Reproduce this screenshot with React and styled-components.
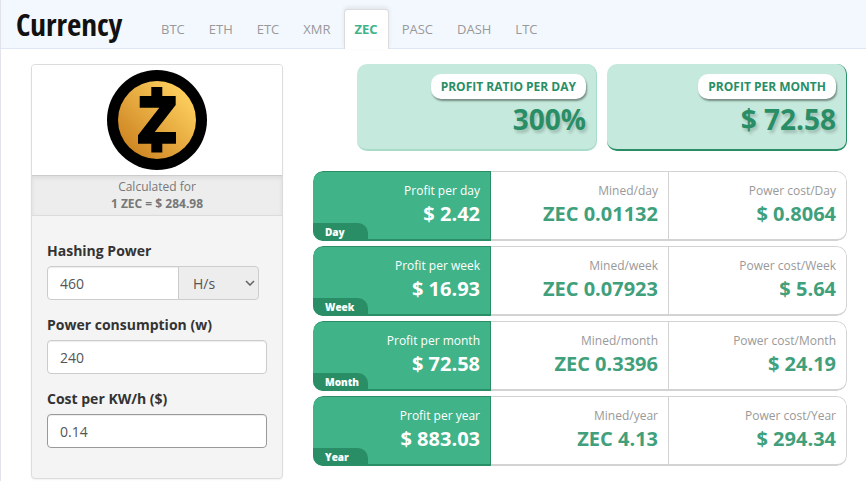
import React, { useState } from "react";
import styled, { createGlobalStyle } from "styled-components";

const GlobalStyle = createGlobalStyle`
    * {
        box-sizing: border-box;
    }
    body {
        margin: 0;
        background-color: #fff;
        font-family: "Open Sans", "Noto Sans", sans-serif;
        font-size: 14px;
        color: #333;
    }
`
const Page = styled.div`
    min-height: 100vh;
    border-left: 1px solid #e3e3ee;
`
const Header = styled.header`
    height: 49px;
    padding-left: 15px;
    background-color: #f3f8ff;
    border-bottom: 1px solid #dfe7f7;
    display: flex;
    align-items: flex-start;
`
const Title = styled.h1`
    width: 134px;
    margin: 0;
    font-family: "Open Sans Condensed", "Noto Sans Condensed", "Liberation Sans Narrow", "Open Sans", sans-serif;
    font-size: 31px;
    line-height: 48px;
    font-weight: 700;
    color: #111;
`
const Tabs = styled.nav`
    display: flex;
    gap: 2px;
    padding-top: 9px;
`
const Tab = styled.a`
    height: 40px;
    padding: 0 10px;
    border: 1px solid ${({ $active }) => ($active ? "#dcdcdc" : "transparent")};
    border-bottom: none;
    border-radius: 4px 4px 0 0;
    background-color: ${({ $active }) => ($active ? "#fff" : "transparent")};
    box-shadow: ${({ $active }) => ($active ? "0 -2px 4px rgba(0, 0, 0, 0.08)" : "none")};
    font-size: 13px;
    line-height: 38px;
    font-weight: ${({ $active }) => ($active ? 700 : 400)};
    color: ${({ $active }) => ($active ? "#41b389" : "#999")};
    text-decoration: none;
`
const Content = styled.main`
    display: flex;
    align-items: flex-start;
    gap: 30px;
    padding: 15px 19px 2px 30px;
`
const Card = styled.section`
    flex: 0 0 252px;
    border: 1px solid #dcdcdc;
    border-radius: 4px;
    background-color: #f4f4f4;
    box-shadow: 0 1px 2px rgba(0, 0, 0, 0.06);
    overflow: hidden;
`
const LogoBox = styled.div`
    height: 110px;
    display: flex;
    justify-content: center;
    align-items: center;
    background-color: #fff;
`
const Rate = styled.div`
    padding: 2px 0 3px;
    border-top: 1px solid #ccc;
    border-bottom: 1px solid #dcdcdc;
    background-color: #ededed;
    box-shadow: inset 0 2px 4px rgba(0, 0, 0, 0.08);
    font-size: 12px;
    line-height: 17px;
    color: #777;
    text-align: center;
`
const Form = styled.form`
    padding: 24px 15px 30px;
    display: flex;
    flex-direction: column;
    gap: 14px;
`
const Field = styled.div`
    display: flex;
    flex-direction: column;
    gap: 5px;
`
const Label = styled.label`
    font-size: 14px;
    line-height: 21px;
    font-weight: 700;
    color: #333;
`
const InputGroup = styled.div`
    display: flex;
    padding-right: 8px;
`
const Input = styled.input`
    width: 100%;
    min-width: 0;
    flex: 1;
    height: 34px;
    min-height: 34px;
    padding: 0 12px;
    border: 1px solid ${({ $dark }) => ($dark ? "#999" : "#ccc")};
    border-radius: ${({ $joined }) => ($joined ? "4px 0 0 4px" : "4px")};
    box-shadow: inset 0 1px 1px rgba(0, 0, 0, 0.075);
    background-color: #fff;
    font-family: inherit;
    font-size: 14px;
    color: #555;
    outline: none;
`
const SelectBox = styled.div`
    position: relative;
    width: 81px;
    margin-left: -1px;
`
const Select = styled.select`
    width: 100%;
    height: 34px;
    padding: 0 14px;
    border: 1px solid #ccc;
    border-radius: 0 4px 4px 0;
    background-color: #ededed;
    appearance: none;
    font-family: inherit;
    font-size: 14px;
    color: #555;
    outline: none;
`
const Arrow = styled.svg`
    position: absolute;
    top: 14px;
    right: 4px;
    width: 10px;
    height: 6px;
    pointer-events: none;
`
const Results = styled.section`
    flex: 1;
    min-width: 0;
`
const Highlights = styled.div`
    display: flex;
    justify-content: flex-end;
    gap: 10px;
    margin-bottom: 20px;
`
const Highlight = styled.div`
    flex: 0 1 240px;
    height: 87px;
    padding: 10px 10px 0 0;
    border: solid ${({ $strong }) => ($strong ? "#298e66" : "#a9dcc8")};
    border-width: 0 1px 2px 0;
    border-radius: 10px;
    background-color: #c5e9dc;
    display: flex;
    flex-direction: column;
    align-items: flex-end;
`
const Badge = styled.div`
    padding: 0 10px;
    border-radius: 10px;
    background-color: #fff;
    box-shadow: 1px 2px 2px rgba(0, 0, 0, 0.4);
    font-size: 12px;
    line-height: 25px;
    font-weight: 700;
    color: #298e66;
    white-space: nowrap;
`
const HighlightValue = styled.div`
    font-size: 28px;
    line-height: 40px;
    font-weight: 700;
    color: #298e66;
    text-shadow: 2px 3px 3px rgba(0, 0, 0, 0.18);
`
const Rows = styled.div`
    display: flex;
    flex-direction: column;
    gap: 5px;
`
const Row = styled.div`
    position: relative;
    height: 70px;
    display: grid;
    grid-template-columns: repeat(3, 1fr);
    border-radius: 10px;
    overflow: hidden;
`
const Cell = styled.div`
    padding: 11px 10px 0 0;
    border: solid ${({ $filled }) => ($filled ? "#298e66" : "#d3d3d3")};
    border-width: 1px 1px 2px 0;
    background-color: ${({ $filled }) => ($filled ? "#41b389" : "#fff")};
    color: ${({ $filled }) => ($filled ? "#fff" : "#999")};
    text-align: right;
    white-space: nowrap;
    &:first-child {
        border-radius: 10px 0 0 10px;
    }
    &:last-child {
        border-radius: 0 10px 10px 0;
    }
`
const CellLabel = styled.div`
    font-size: 12px;
    line-height: 16px;
`
const CellValue = styled.div`
    font-size: 20px;
    line-height: 30px;
    font-weight: 700;
    color: ${({ $filled }) => ($filled ? "#fff" : "#41a07c")};
`
const Period = styled.div`
    position: absolute;
    left: 0;
    bottom: 0;
    width: 55px;
    height: 18px;
    padding-left: 12px;
    border-top-right-radius: 10px;
    background-color: #298e66;
    font-size: 10px;
    line-height: 18px;
    font-weight: 800;
    color: #fff;
    text-align: left;
`

const ZcashLogo = () => (
    <svg width="100" height="100" viewBox="0 0 100 100" role="img" aria-label="Zcash">
        <defs>
            <linearGradient id="gold" x1="0.15" y1="0.85" x2="0.85" y2="0.15">
                <stop offset="0" stopColor="#cf8724" />
                <stop offset="1" stopColor="#fdce5c" />
            </linearGradient>
        </defs>
        <circle cx="50" cy="50" r="50" />
        <circle cx="50" cy="50" r="39" fill="url(#gold)" />
        <path d="M44.3 17h11v9h13.4v9L47.7 62H69v11.7H55.3v8.8h-11v-8.8H31v-8.4l21.3-27.6H32.7V26h11.6z" />
    </svg>
)

const coins = ["BTC", "ETH", "ETC", "XMR", "ZEC", "PASC", "DASH", "LTC"]

const periods = [
    { name: "Day", unit: "day", profit: "$ 2.42", mined: "ZEC 0.01132", cost: "$ 0.8064" },
    { name: "Week", unit: "week", profit: "$ 16.93", mined: "ZEC 0.07923", cost: "$ 5.64" },
    { name: "Month", unit: "month", profit: "$ 72.58", mined: "ZEC 0.3396", cost: "$ 24.19" },
    { name: "Year", unit: "year", profit: "$ 883.03", mined: "ZEC 4.13", cost: "$ 294.34" },
]

const App = () => {
    const [active, setActive] = useState("ZEC")

    return (
        <Page>
            <GlobalStyle />
            <Header>
                <Title>Currency</Title>
                <Tabs>
                    {coins.map((coin) => (
                        <Tab key={coin} href={`#${coin}`} $active={coin === active} onClick={() => setActive(coin)}>
                            {coin}
                        </Tab>
                    ))}
                </Tabs>
            </Header>
            <Content>
                <Card>
                    <LogoBox><ZcashLogo /></LogoBox>
                    <Rate>
                        Calculated for<br />
                        <b>1 ZEC = $ 284.98</b>
                    </Rate>
                    <Form>
                        <Field>
                            <Label htmlFor="hashing">Hashing Power</Label>
                            <InputGroup>
                                <Input id="hashing" defaultValue="460" $joined />
                                <SelectBox>
                                    <Select aria-label="Hashing unit" defaultValue="H/s">
                                        <option>H/s</option>
                                        <option>KH/s</option>
                                        <option>MH/s</option>
                                    </Select>
                                    <Arrow viewBox="0 0 10 6" fill="none" stroke="#666" strokeWidth="1.6">
                                        <path d="M1 1l4 4 4-4" />
                                    </Arrow>
                                </SelectBox>
                            </InputGroup>
                        </Field>
                        <Field>
                            <Label htmlFor="power">Power consumption (w)</Label>
                            <Input id="power" defaultValue="240" />
                        </Field>
                        <Field>
                            <Label htmlFor="cost">Cost per KW/h ($)</Label>
                            <Input id="cost" defaultValue="0.14" $dark />
                        </Field>
                    </Form>
                </Card>
                <Results>
                    <Highlights>
                        <Highlight>
                            <Badge>PROFIT RATIO PER DAY</Badge>
                            <HighlightValue>300%</HighlightValue>
                        </Highlight>
                        <Highlight $strong>
                            <Badge>PROFIT PER MONTH</Badge>
                            <HighlightValue>$ 72.58</HighlightValue>
                        </Highlight>
                    </Highlights>
                    <Rows>
                        {periods.map((p) => (
                            <Row key={p.name}>
                                <Cell $filled>
                                    <CellLabel>Profit per {p.unit}</CellLabel>
                                    <CellValue $filled>{p.profit}</CellValue>
                                    <Period>{p.name}</Period>
                                </Cell>
                                <Cell>
                                    <CellLabel>Mined/{p.unit}</CellLabel>
                                    <CellValue>{p.mined}</CellValue>
                                </Cell>
                                <Cell>
                                    <CellLabel>Power cost/{p.name}</CellLabel>
                                    <CellValue>{p.cost}</CellValue>
                                </Cell>
                            </Row>
                        ))}
                    </Rows>
                </Results>
            </Content>
        </Page>
    )
}

export default App;
